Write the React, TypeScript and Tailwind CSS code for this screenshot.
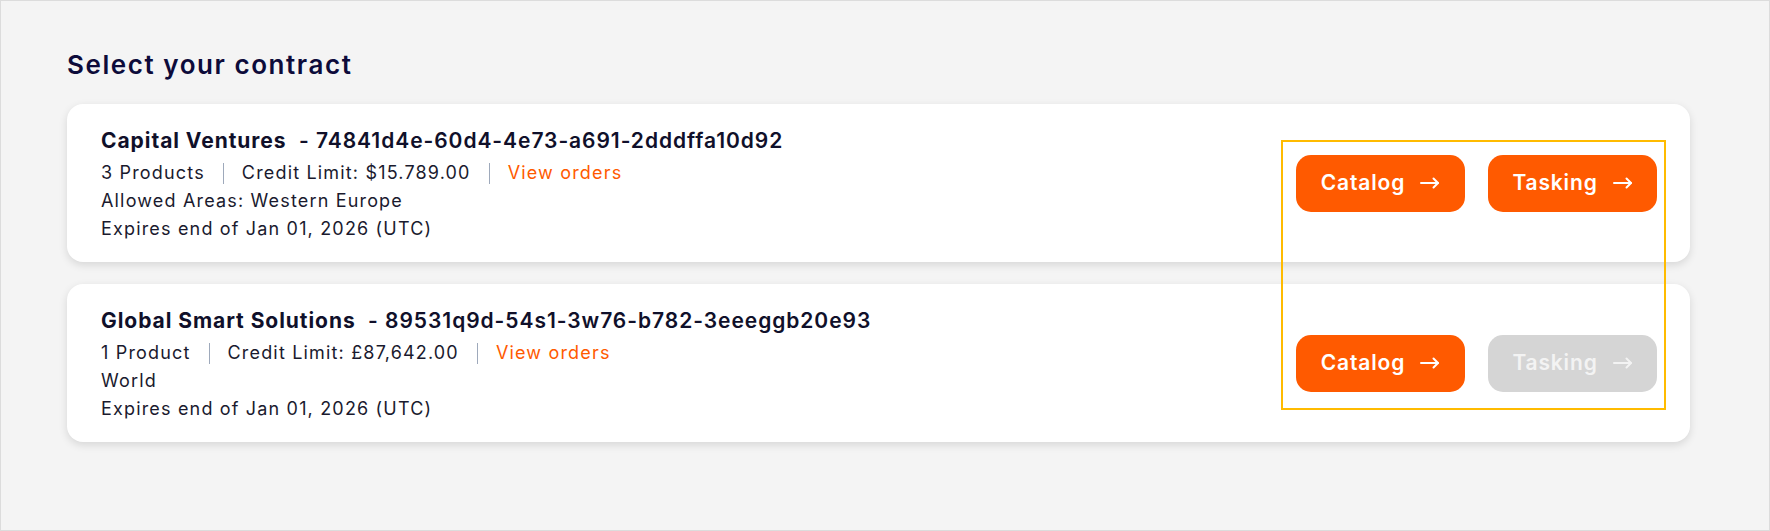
const contracts = [
  {
    id: '74841d4e-60d4-4e73-a691-2dddffa10d92',
    name: 'Capital Ventures',
    products: '3 Products',
    credit: 'Credit Limit: $15.789.00',
    area: 'Allowed Areas: Western Europe',
    expires: 'Expires end of Jan 01, 2026 (UTC)',
    tasking: true,
  },
  {
    id: '89531q9d-54s1-3w76-b782-3eeeggb20e93',
    name: 'Global Smart Solutions',
    products: '1 Product',
    credit: 'Credit Limit: £87,642.00',
    area: 'World',
    expires: 'Expires end of Jan 01, 2026 (UTC)',
    tasking: false,
  },
];

function Divider() {
  return <span className="mx-[18px] h-[21px] w-px bg-[#9ea9bb]" />;
}

function Arrow() {
  return (
    <svg width="20" height="12" viewBox="0 0 20 12" fill="none" stroke="currentColor" strokeWidth="2" strokeLinecap="round" strokeLinejoin="round">
      <path d="M1 6h17" />
      <path d="M13.5 1.5 18 6l-4.5 4.5" />
    </svg>
  );
}

function ActionButton({ label, disabled }: { label: string; disabled?: boolean }) {
  return (
    <button
      disabled={disabled}
      className={
        disabled
          ? 'flex h-[57px] w-[169px] items-center justify-center gap-[15px] rounded-[15px] bg-[#d5d5d5] text-[21px] font-semibold tracking-[0.04em] text-[#f3f3f3]'
          : 'flex h-[57px] w-[169px] items-center justify-center gap-[15px] rounded-[15px] bg-[#ff5a00] text-[21px] font-semibold tracking-[0.04em] text-white'
      }
    >
      <span>{label}</span>
      <Arrow />
    </button>
  );
}

export default function App() {
  return (
    <div className="relative h-[531px] w-full border border-[#dcdcdc] bg-[#f4f4f4] pl-[66px] pr-[79px] pt-[48px] font-['Inter',sans-serif]">
      <h1 className="text-[26px] font-semibold leading-[32px] tracking-[0.06em] text-[#0d0b3a]">Select your contract</h1>

      <div className="mt-[23px] flex flex-col gap-[22px]">
        {contracts.map((c) => (
          <div
            key={c.id}
            className="flex h-[158px] items-center justify-between rounded-[16px] bg-white pl-[34px] pr-[33px] shadow-[0_3px_8px_rgba(0,0,0,0.12)]"
          >
            <div className="pt-[4px] text-[#1a1a2e]">
              <div className="whitespace-pre text-[21px] leading-[28px] tracking-[0.045em] text-[#10102a]">
                <span className="font-bold">{c.name}</span>
                <span className="font-semibold">{'  - '}{c.id}</span>
              </div>
              <div className="mt-1 flex items-center text-[18px] leading-[28px] tracking-[0.065em]">
                <span>{c.products}</span>
                <Divider />
                <span>{c.credit}</span>
                <Divider />
                <a className="text-[#ff5a00]">View orders</a>
              </div>
              <div className="text-[18px] leading-[28px] tracking-[0.065em]">{c.area}</div>
              <div className="text-[18px] leading-[28px] tracking-[0.065em]">{c.expires}</div>
            </div>
            <div className="flex gap-[23px]">
              <ActionButton label="Catalog" />
              <ActionButton label="Tasking" disabled={!c.tasking} />
            </div>
          </div>
        ))}
      </div>

      <div className="pointer-events-none absolute left-[1280px] top-[139px] h-[270px] w-[385px] border-2 border-[#ffbb00]" />
    </div>
  );
}
